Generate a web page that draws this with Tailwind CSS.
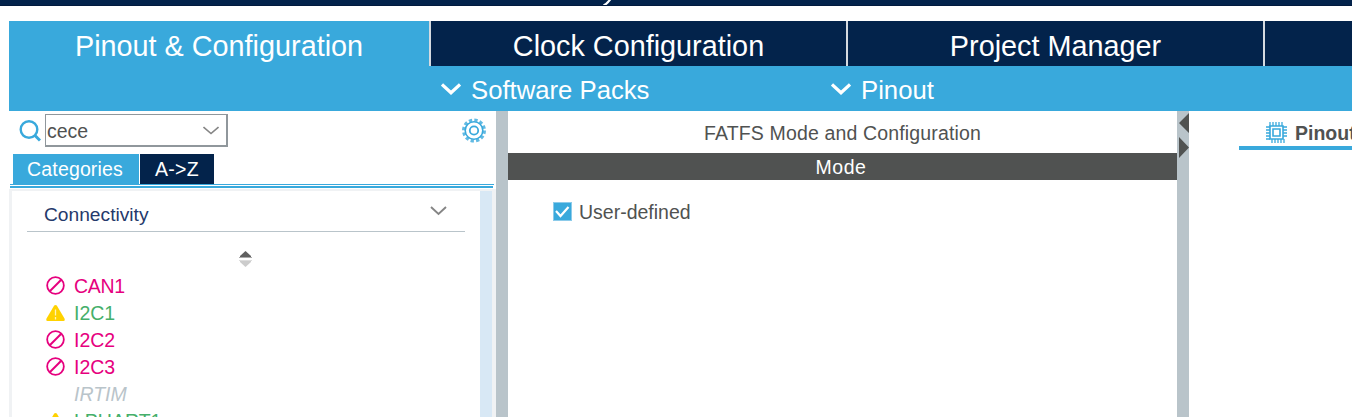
<!DOCTYPE html>
<html lang="en">
<head>
<meta charset="utf-8">
<title>Pinout &amp; Configuration</title>
<script src="https://cdn.jsdelivr.net/npm/@tailwindcss/browser@4"></script>
</head>
<body class="h-[417px] w-[1352px] overflow-hidden bg-white font-['Liberation_Sans',Arial,sans-serif] text-[#505251]">
<svg class="hidden">
  <symbol id="ban" viewBox="0 0 18 18"><g fill="none" stroke="#e6007e"><circle cx="9" cy="9" r="7.900" stroke-width="1.700"/><path d="M3.800 14.200 14.200 3.800" stroke-width="1.900"/></g></symbol>
  <symbol id="warn" viewBox="0 0 19 16"><path d="M8.200.6Q9.500-.6 10.800.6L18.500 13.500Q19.300 16 17.500 16H1.500Q-.3 16 .5 13.500Z" fill="#ffd200"/><path d="M9.500 4.500V10.500M9.500 12V14.500" stroke="#fff3b8" stroke-width="1.300"/></symbol>
</svg>
<div class="flex h-full flex-col">
  <div class="h-1.5 shrink-0 overflow-hidden border-b border-[#021a3d] bg-[#03234b] pl-[602px]">
    <svg class="block overflow-visible" width="10" height="6" viewBox="0 0 10 6"><path d="M8.500-1Q5 4 1.500 5.500" fill="none" stroke="#fff" stroke-width="2.200"/></svg>
  </div>
  <nav class="mt-[15px] ml-[9px] flex h-[45px] shrink-0 bg-[#03234b] text-center text-[28.800px] leading-[45px] whitespace-nowrap text-white">
    <div class="w-[420px] bg-[#39a9dc] pt-[3px]">Pinout &amp; Configuration</div>
    <div class="w-[417px] border-l-2 border-[#d5dae0] pt-[3px]">Clock Configuration</div>
    <div class="w-[417px] border-l-2 border-[#d5dae0] pt-[3px]">Project Manager</div>
    <div class="w-[89px] border-l-2 border-[#d5dae0]"></div>
  </nav>
  <div class="ml-[9px] flex h-[45px] shrink-0 bg-[#39a9dc] pl-[432px] text-[25.700px] leading-[45px] text-white">
    <div class="flex w-[390px] gap-[10px]">
      <svg class="mt-[17px]" width="20" height="13" viewBox="0 0 20 13" fill="none" stroke="#fff" stroke-width="3.200"><path d="M1 1.500 10 9.800 19 1.500"/></svg>
      <span class="pt-[2px]">Software Packs</span>
    </div>
    <div class="flex gap-[10px]">
      <svg class="mt-[17px]" width="20" height="13" viewBox="0 0 20 13" fill="none" stroke="#fff" stroke-width="3.200"><path d="M1 1.500 10 9.800 19 1.500"/></svg>
      <span class="pt-[2px]">Pinout</span>
    </div>
  </div>
  <main class="ml-[9px] flex min-h-0 flex-1">
    <section class="flex w-[487px] shrink-0 flex-col">
      <div class="flex h-[43px] shrink-0 items-start pt-[3px]">
        <svg class="mt-[6px] ml-[10px]" width="22" height="22" viewBox="0 0 22 22" fill="none" stroke="#39a9dc"><circle cx="10" cy="9.500" r="8.300" stroke-width="2.400"/><path d="m16 15.500 5 5" stroke-width="3"/></svg>
        <div class="ml-[4px] flex h-[33px] w-[183px] items-center justify-between border border-r-2 border-b-2 border-[#90979c] pr-[7px] pl-px text-[19.5px]">
          <span class="pt-[3px]">cece</span>
          <svg class="mt-px" width="16" height="9" viewBox="0 0 16 9" fill="none" stroke="#858585" stroke-width="1.600"><path d="m.5 1 7.500 6.500 7.500-6.500"/></svg>
        </div>
        <svg class="mt-[4px] ml-[233px]" width="26" height="26" viewBox="0 0 26 26" fill="none" stroke="#39a9dc">
          <circle cx="13" cy="12.500" r="10.500" stroke-width="3" stroke-dasharray="3.300 2.198" stroke-opacity=".8"/>
          <circle cx="13" cy="12.500" r="8.800" stroke-width="1.600"/><circle cx="13" cy="12.500" r="4.200" stroke-width="1.800"/>
        </svg>
      </div>
      <div class="ml-[4px] flex h-[30px] shrink-0 gap-px text-center text-[19.5px] leading-[31px] text-white">
        <div class="w-[126px] bg-[#39a9dc] pr-[2px] tracking-[0.15px]">Categories</div>
        <div class="w-[74px] bg-[#03234b] tracking-[0.3px]">A-&gt;Z</div>
      </div>
      <div class="ml-px h-px w-[484px] shrink-0 bg-[#39a9dc]"></div>
      <div class="mt-px ml-px h-[2px] w-[483px] shrink-0 bg-[#39a9dc]"></div>
      <div class="mt-px flex min-h-0 flex-1 overflow-hidden border-t-2 border-r-4 border-l-3 border-[#f0f2f4]">
        <div class="w-[468px] shrink-0 pl-[15px]">
          <div class="flex h-[41px] w-[438px] justify-between border-b border-[#b9c4ca] pr-[18px] pl-[17px] text-[19.200px] leading-[41px] text-[#25396b]">
            <span class="pt-[3px]">Connectivity</span>
            <svg class="mt-[15px]" width="17" height="10" viewBox="0 0 17 10" fill="none" stroke="#858585" stroke-width="1.900"><path d="m1 1 7.500 7L16 1"/></svg>
          </div>
          <svg class="mt-[19px] ml-[212px]" width="13" height="16" viewBox="0 0 13 16"><path d="M6.500 0 12 5v2H1V5Z" fill="#606060"/><path d="M0 6.500h13" stroke="#aaa"/><path d="M1 9.500h11v1.500L6.500 16 1 11Z" fill="#ccc"/><path d="M0 9.500h13" stroke="#ddd"/></svg>
          <ul class="mt-[5px] pl-[19px] text-[19.500px] leading-[27px] whitespace-nowrap">
            <li class="flex h-[27px] gap-[9px] text-[#e6007e]"><svg class="mt-[4px]" width="19" height="19"><use href="#ban"/></svg><span class="pt-px tracking-[-0.3px]">CAN1</span></li>
            <li class="flex h-[27px] gap-[9px] text-[#45af6a]"><svg class="mt-[6px]" width="19" height="16"><use href="#warn"/></svg><span class="pt-px">I2C1</span></li>
            <li class="flex h-[27px] gap-[9px] text-[#e6007e]"><svg class="mt-[4px]" width="19" height="19"><use href="#ban"/></svg><span class="pt-px">I2C2</span></li>
            <li class="flex h-[27px] gap-[9px] text-[#e6007e]"><svg class="mt-[4px]" width="19" height="19"><use href="#ban"/></svg><span class="pt-px">I2C3</span></li>
            <li class="h-[27px] pt-px pl-[28px] text-[#b9c4ca] italic">IRTIM</li>
            <li class="flex h-[27px] gap-[9px] text-[#45af6a]"><svg class="mt-[6px]" width="19" height="16"><use href="#warn"/></svg><span class="pt-px">LPUART1</span></li>
          </ul>
        </div>
        <div class="w-3 shrink-0 bg-[#d8e8f5]"></div>
      </div>
    </section>
    <div class="w-3 shrink-0 bg-[#b9c4ca]"></div>
    <section class="w-[669px] shrink-0 text-[19.500px]">
      <h2 class="h-[42px] pt-px text-center leading-[42px] tracking-[0.15px]">FATFS Mode and Configuration</h2>
      <div class="h-[27px] bg-[#505251] pt-px pr-[3px] text-center leading-[27px] tracking-[0.5px] text-white">Mode</div>
      <label class="mt-[22px] flex pl-[45px] leading-[19px]">
        <svg width="19" height="19" viewBox="0 0 19 19"><path d="M0 0h19v19H0z" fill="#8ccbea"/><path d="M1 1h17v17H1z" fill="#39a9dc"/><path d="m3 9 4.500 5L15.500 5" fill="none" stroke="#fff" stroke-width="2.200"/></svg>
        <span class="ml-[7px] pt-px">User-defined</span>
      </label>
    </section>
    <div class="w-3 shrink-0 bg-[#b9c4ca]">
      <svg class="block" width="12" height="48" viewBox="0 0 12 48" fill="#505251"><path d="M12 2v20L2 12ZM2 26v21L12 36.500Z"/></svg>
    </div>
    <section class="min-w-0 flex-1 overflow-hidden pl-[50px]">
      <div class="flex h-[39px] w-[140px] border-b-4 border-[#39a9dc] pl-[27px] text-[19.500px] leading-[35px] font-bold whitespace-nowrap">
        <svg class="mt-[11px] shrink-0" width="21" height="21" viewBox="0 0 21 21" fill="none" stroke="#39a9dc"><path d="M4 0v4M7 0v4M10 0v4M13 0v4M16 0v4M6 17v4M9 17v4M12 17v4M15 17v4M18 17v4M0 5h4M0 8h4M0 11h4M0 14h4M0 17h4M17 5h4M17 8h4M17 11h4M17 14h4" stroke-width="1.300"/><path d="M4 4h13v13H4zM7 7h7v7H7z" stroke-width="1.600"/></svg>
        <span class="ml-[8px] pt-[5px]">Pinout</span>
      </div>
    </section>
  </main>
</div>
</body>
</html>
